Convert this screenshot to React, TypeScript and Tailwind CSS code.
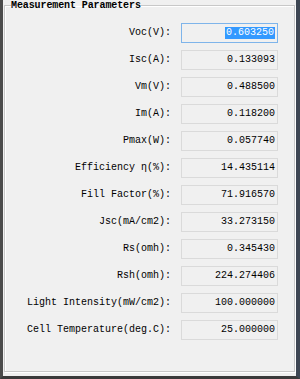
import React from 'react'

const ROWS: { label: string; value: string }[] = [
  { label: 'Voc(V):', value: '0.603250' },
  { label: 'Isc(A):', value: '0.133093' },
  { label: 'Vm(V):', value: '0.488500' },
  { label: 'Im(A):', value: '0.118200' },
  { label: 'Pmax(W):', value: '0.057740' },
  { label: 'Efficiency η(%):', value: '14.435114' },
  { label: 'Fill Factor(%):', value: '71.916570' },
  { label: 'Jsc(mA/cm2):', value: '33.273150' },
  { label: 'Rs(omh):', value: '0.345430' },
  { label: 'Rsh(omh):', value: '224.274406' },
  { label: 'Light Intensity(mW/cm2):', value: '100.000000' },
  { label: 'Cell Temperature(deg.C):', value: '25.000000' },
]

export default function App() {
  return (
    <div
      className="w-[300px] h-[379px] bg-[#f0f0f0] border-l-[3px] border-l-[#4b4b4b] border-r-[4px] border-r-[#3d4653] border-b-[3px] border-b-[#3a3a3a] pl-[1px] pr-[1px] pb-[4px] text-black"
      style={{ fontFamily: '"Liberation Mono", "DejaVu Sans Mono", monospace' }}
    >
      <fieldset className="h-full border border-[#c8c8c8] shadow-[inset_1px_1px_0_#ffffff,1px_1px_0_#ffffff]">
        <legend className="ml-[6px] text-[10px] font-bold leading-[11px] tracking-[-0.1px]">
          Measurement Parameters
        </legend>
        <div className="flex flex-col gap-[7px] pt-[12px]">
          {ROWS.map((r, i) => (
            <div key={r.label} className="flex items-center h-[20px]">
              <div className="w-[166px] text-right text-[10px] leading-[12px] whitespace-nowrap">
                {r.label}
              </div>
              <div
                className={`ml-[10px] w-[97px] h-[20px] flex items-center justify-end pr-[2px] text-[10px] leading-[12px] bg-[#f0f0f0] border ${
                  i === 0 ? 'border-[#7eb4ea]' : 'border-[#dadada]'
                }`}
              >
                {i === 0 ? (
                  <span className="bg-[#3399ff] text-white px-[1px]">{r.value}</span>
                ) : (
                  r.value
                )}
              </div>
            </div>
          ))}
        </div>
      </fieldset>
    </div>
  )
}
